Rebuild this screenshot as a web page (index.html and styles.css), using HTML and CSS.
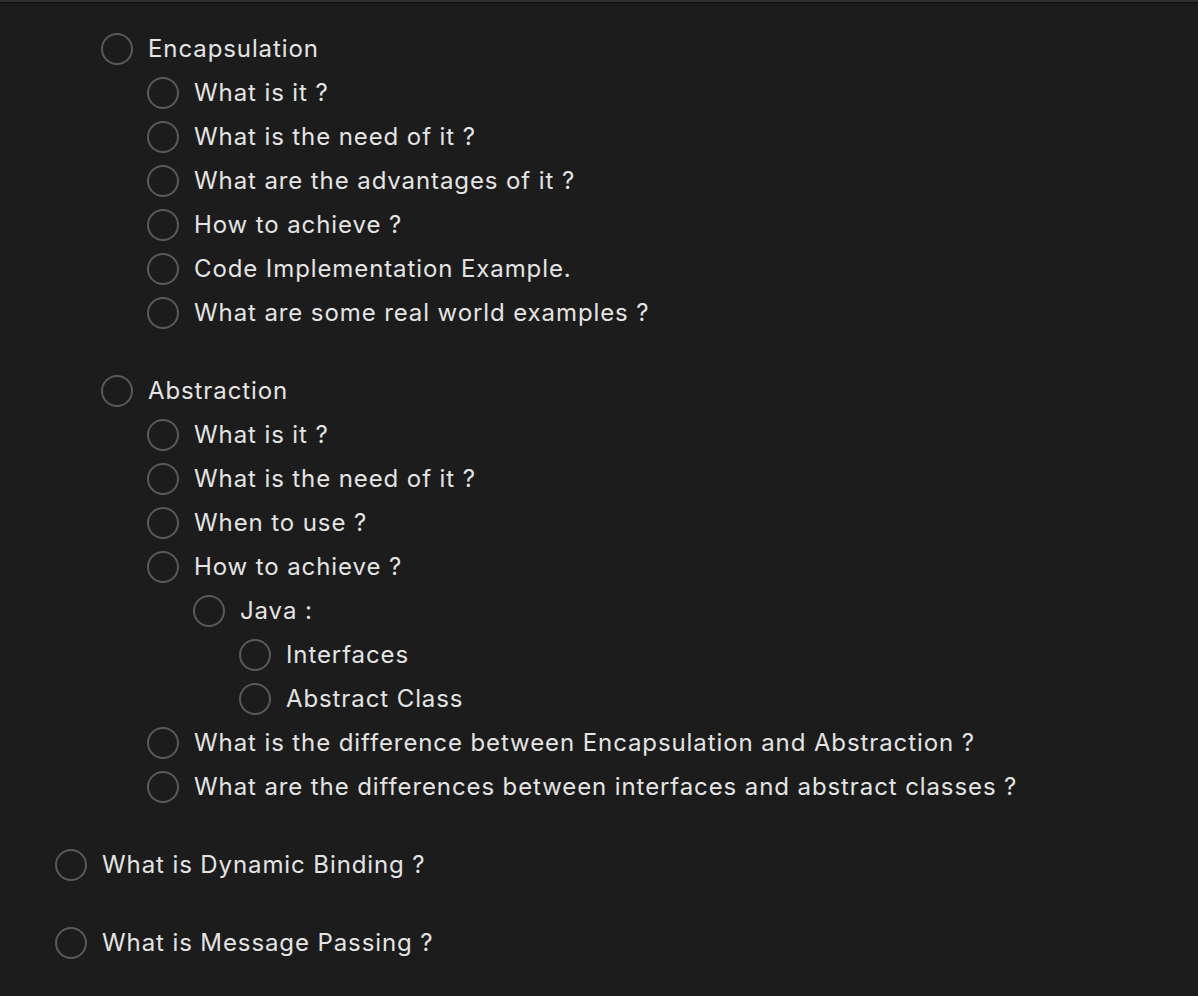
FILE: index.html
```html
<!DOCTYPE html>
<html>
<head>
<meta charset="utf-8">
<link rel="stylesheet" href="styles.css">
</head>
<body>
<div class="page">
  <ul class="list groups">
    <li>
      <ul class="list groups level">
        <li>
          <div class="row"><span class="check"></span><span class="label">Encapsulation</span></div>
          <ul class="list level">
            <li><div class="row"><span class="check"></span><span class="label">What is it ?</span></div></li>
            <li><div class="row"><span class="check"></span><span class="label">What is the need of it ?</span></div></li>
            <li><div class="row"><span class="check"></span><span class="label">What are the advantages of it ?</span></div></li>
            <li><div class="row"><span class="check"></span><span class="label">How to achieve ?</span></div></li>
            <li><div class="row"><span class="check"></span><span class="label">Code Implementation Example.</span></div></li>
            <li><div class="row"><span class="check"></span><span class="label">What are some real world examples ?</span></div></li>
          </ul>
        </li>
        <li>
          <div class="row"><span class="check"></span><span class="label">Abstraction</span></div>
          <ul class="list level">
            <li><div class="row"><span class="check"></span><span class="label">What is it ?</span></div></li>
            <li><div class="row"><span class="check"></span><span class="label">What is the need of it ?</span></div></li>
            <li><div class="row"><span class="check"></span><span class="label">When to use ?</span></div></li>
            <li>
              <div class="row"><span class="check"></span><span class="label">How to achieve ?</span></div>
              <ul class="list level">
                <li>
                  <div class="row"><span class="check"></span><span class="label">Java :</span></div>
                  <ul class="list level">
                    <li><div class="row"><span class="check"></span><span class="label">Interfaces</span></div></li>
                    <li><div class="row"><span class="check"></span><span class="label">Abstract Class</span></div></li>
                  </ul>
                </li>
              </ul>
            </li>
            <li><div class="row"><span class="check"></span><span class="label">What is the difference between Encapsulation and Abstraction ?</span></div></li>
            <li><div class="row"><span class="check"></span><span class="label">What are the differences between interfaces and abstract classes ?</span></div></li>
          </ul>
        </li>
      </ul>
    </li>
    <li><div class="row"><span class="check"></span><span class="label">What is Dynamic Binding ?</span></div></li>
    <li><div class="row"><span class="check"></span><span class="label">What is Message Passing ?</span></div></li>
  </ul>
</div>
</body>
</html>
```

FILE: styles.css
```css
html, body {
  margin: 0;
  padding: 0;
  background: #1c1c1c;
}
body {
  width: 1198px;
  height: 996px;
  overflow: hidden;
  border-top: 2px solid #2f2f2f;
  box-sizing: border-box;
  font-family: Inter, "Noto Sans", sans-serif;
  color: #e4e4e4;
}
.page {
  border-top: 1px solid #0c0c0c;
  padding: 24px 0 0 55px;
}
.list {
  list-style: none;
  margin: 0;
  padding: 0;
}
.groups {
  display: flex;
  flex-direction: column;
  gap: 34px;
}
.level {
  padding-left: 46px;
}
.row {
  display: flex;
  align-items: center;
  height: 44px;
}
.check {
  width: 32px;
  height: 32px;
  box-sizing: border-box;
  border: 2px solid #5a5a5a;
  border-radius: 50%;
  flex: none;
  margin-right: 15px;
}
.label {
  font-size: 24px;
  letter-spacing: 0.9px;
  line-height: 44px;
  white-space: nowrap;
}
```
